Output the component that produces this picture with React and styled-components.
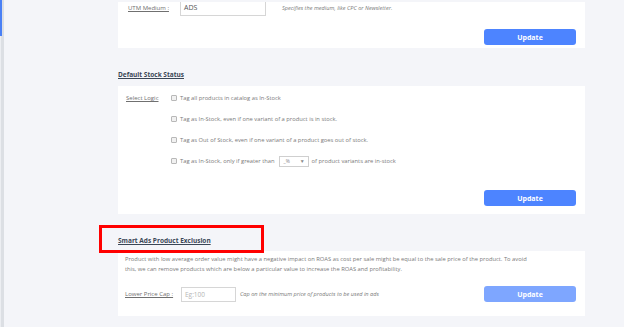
import React from 'react';
import styled, { createGlobalStyle } from 'styled-components';

const GlobalStyle = createGlobalStyle`
  html,
  body {
    background: #f4f5f9;
    margin: 0;
    padding: 0;
  }

  body {
    font-family: 'Open Sans', 'Liberation Sans', sans-serif;
  }
`;

const Page = styled.div`
  display: flex;
  flex-flow: row nowrap;
  height: 327px;
  overflow: hidden;
  width: 100%;
`;

const Rail = styled.aside`
  background: #dcdfe4;
  border-left: 1px solid #eceef2;
  display: flex;
  flex: 0 0 auto;
  flex-flow: column nowrap;
  width: 3px;
`;

const RailIndicator = styled.div`
  background: #4a80f5;
  height: 36px;
  margin-left: -1px;
  width: 2px;
`;

const Main = styled.main`
  display: flex;
  flex: 1 1 0;
  flex-flow: column nowrap;
  padding: 2px 0 0 114px;
`;

const Card = styled.section`
  background: #fff;
  box-sizing: border-box;
  overflow: ${(p) => (p.$clip ? 'hidden' : 'visible')};
  padding: ${(p) => p.$pad};
  width: 467px;
`;

const FieldRow = styled.div`
  align-items: center;
  display: flex;
  flex-flow: row nowrap;
  height: ${(p) => p.$h || 17}px;
  margin-top: ${(p) => p.$mt || 0}px;
`;

const FieldLabel = styled.span`
  color: #707070;
  flex: 0 0 ${(p) => p.$w}px;
  font-size: 6px;
  line-height: ${(p) => p.$lh || 'normal'};
  text-decoration: underline;
  text-underline-offset: 1px;
`;

const TextInput = styled.div`
  align-items: center;
  border: 1px solid #d6d6d6;
  box-sizing: border-box;
  color: ${(p) => (p.$placeholder ? '#b5b5b5' : '#555')};
  display: flex;
  font-size: ${(p) => (p.$placeholder ? 6.5 : 7)}px;
  height: ${(p) => p.$h}px;
  padding-left: 3px;
  width: ${(p) => p.$w}px;
`;

const Hint = styled.span`
  color: #7a7a7a;
  font-size: 5.6px;
  font-style: italic;
  margin-left: ${(p) => p.$ml}px;
`;

const ButtonRow = styled.div`
  display: flex;
  justify-content: flex-end;
  margin-top: ${(p) => p.$mt}px;
  padding-right: 9px;
`;

const UpdateButton = styled.button`
  background: ${(p) => (p.$muted ? '#7ea6ff' : '#4d84ff')};
  border: 0;
  border-radius: 3px;
  color: #fff;
  font-family: 'Open Sans', 'Liberation Sans', sans-serif;
  font-size: 7px;
  font-weight: 700;
  height: 16px;
  margin-left: ${(p) => (p.$auto ? 'auto' : '0')};
  padding: 0;
  width: 92px;
`;

const SectionTitle = styled.h3`
  color: #3a4656;
  font-size: 6.5px;
  font-weight: 700;
  line-height: 10px;
  margin: 22px 0 ${(p) => p.$mb}px 0;
  position: relative;
  text-decoration: underline;
  text-underline-offset: 1px;
  width: max-content;
`;

const Highlight = styled.span`
  border: 3px solid #ff0000;
  box-sizing: border-box;
  height: 28px;
  left: -19px;
  pointer-events: none;
  position: absolute;
  top: -11px;
  width: 165px;
  z-index: 2;
`;

const LogicGrid = styled.div`
  display: flex;
  flex-flow: row nowrap;
`;

const Options = styled.div`
  display: flex;
  flex-flow: column nowrap;
  gap: 9px;
`;

const Option = styled.label`
  align-items: center;
  color: #7a7a7a;
  display: flex;
  font-size: 5.8px;
  height: 12px;
  white-space: nowrap;
`;

const CheckBox = styled.span`
  background: #f1f1f1;
  border: 1px solid #b8b8b8;
  border-radius: 1px;
  box-sizing: border-box;
  height: 6px;
  margin-right: 3px;
  width: 6px;
`;

const Select = styled.span`
  align-items: center;
  border: 1px solid #cfcfcf;
  box-sizing: border-box;
  color: #888;
  display: inline-flex;
  font-size: 5px;
  height: 11px;
  justify-content: space-between;
  margin: 0 3px 0 4px;
  padding: 0 3px 0 4px;
  width: 30px;
`;

const Paragraph = styled.p`
  color: #7a7a7a;
  font-size: 5.8px;
  line-height: 10px;
  margin: 0;
`;

export default function App() {
  return (
    <>
      <GlobalStyle />
      <Page>
        <Rail>
          <RailIndicator />
        </Rail>
        <Main>
          <Card $clip $pad="0 0 3px 10px">
            <FieldRow $mt={-3}>
              <FieldLabel $w={52}>UTM Medium :</FieldLabel>
              <TextInput $w={86} $h={17}>ADS</TextInput>
              <Hint $ml={16}>Specifies the medium, like CPC or Newsletter.</Hint>
            </FieldRow>
            <ButtonRow $mt={13}>
              <UpdateButton>Update</UpdateButton>
            </ButtonRow>
          </Card>

          <SectionTitle $mb={6}>Default Stock Status</SectionTitle>
          <Card $pad="6px 0 8px 8px">
            <LogicGrid>
              <FieldLabel $w={45} $lh="12px" as="div">
                Select Logic
              </FieldLabel>
              <Options>
                <Option>
                  <CheckBox />
                  Tag all products in catalog as In-Stock
                </Option>
                <Option>
                  <CheckBox />
                  Tag as In-Stock, even if one variant of a product is in stock.
                </Option>
                <Option>
                  <CheckBox />
                  Tag as Out of Stock, even if one variant of a product goes out of stock.
                </Option>
                <Option>
                  <CheckBox />
                  Tag as In-Stock, only if greater than
                  <Select>
                    <span>_%</span>
                    <span>▼</span>
                  </Select>
                  of product variants are in-stock
                </Option>
              </Options>
            </LogicGrid>
            <ButtonRow $mt={23}>
              <UpdateButton>Update</UpdateButton>
            </ButtonRow>
          </Card>

          <SectionTitle $mb={5}>
            Smart Ads Product Exclusion
            <Highlight />
          </SectionTitle>
          <Card $pad="3px 9px 14px 7px">
            <Paragraph>
              Product with low average order value might have a negative impact on ROAS as cost per sale might be equal to the sale price of the product. To avoid
              <br />
              this, we can remove products which are below a particular value to increase the ROAS and profitability.
            </Paragraph>
            <FieldRow $h={16} $mt={12}>
              <FieldLabel $w={56}>Lower Price Cap :</FieldLabel>
              <TextInput $w={55} $h={15} $placeholder>
                Eg:100
              </TextInput>
              <Hint $ml={4}>Cap on the minimum price of products to be used in ads</Hint>
              <UpdateButton $muted $auto>
                Update
              </UpdateButton>
            </FieldRow>
          </Card>
        </Main>
      </Page>
    </>
  );
}
